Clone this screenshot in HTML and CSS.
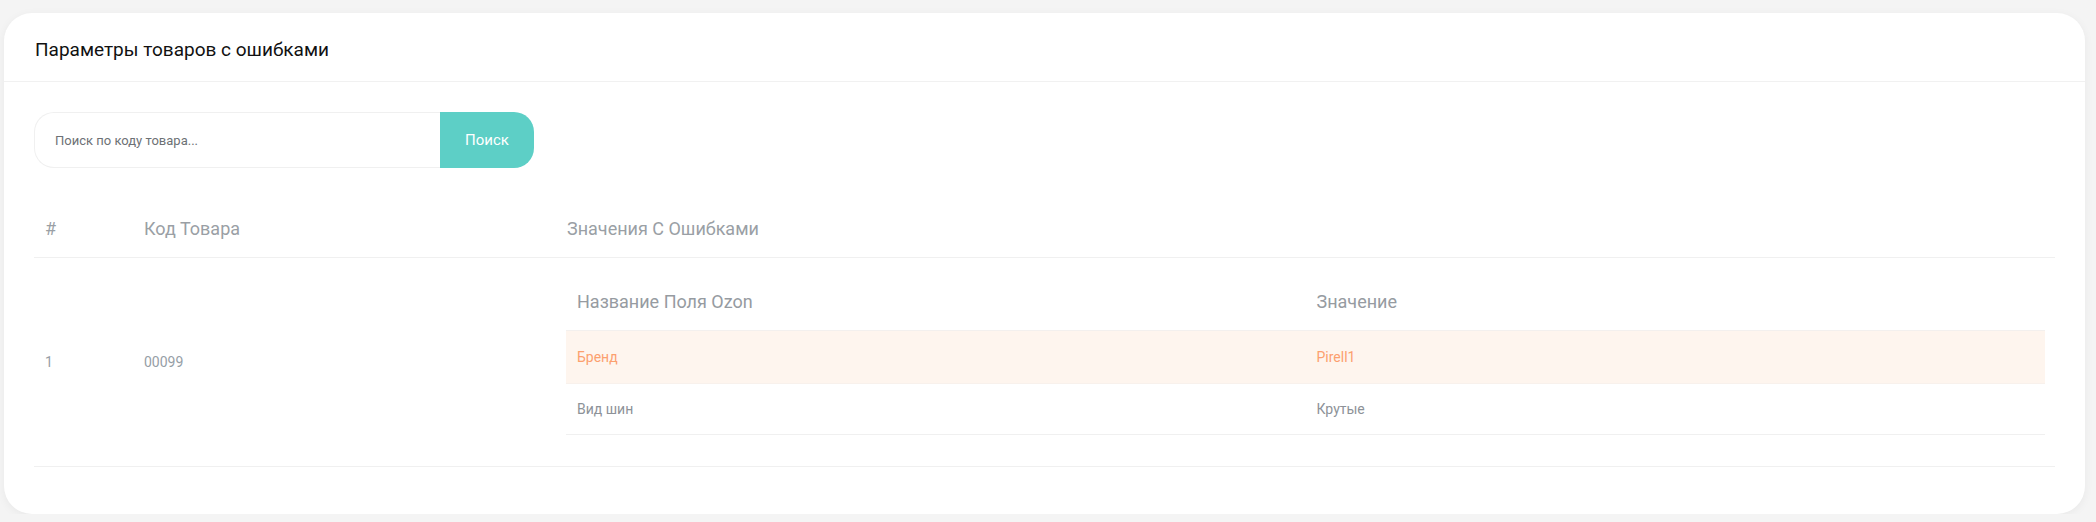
FILE: index.html
```html
<!DOCTYPE html>
<html lang="ru">
<head>
  <meta charset="UTF-8">
  <title>Параметры товаров с ошибками</title>
  <link rel="stylesheet" href="styles.css">
</head>
<body>

  <div class="card">
    <div class="card-header">
      <h4 class="card-title">Параметры товаров с ошибками</h4>
    </div>

    <div class="card-body">
      <form class="search" id="searchForm">
        <input type="text" class="search-input" placeholder="Поиск по коду товара...">
        <button type="submit" class="search-btn">Поиск</button>
      </form>

      <table class="errors">
        <colgroup>
          <col class="col-num">
          <col class="col-code">
          <col>
        </colgroup>
        <thead>
          <tr>
            <th>#</th>
            <th>Код Товара</th>
            <th>Значения С Ошибками</th>
          </tr>
        </thead>
        <tbody>
          <tr>
            <td>1</td>
            <td>00099</td>
            <td class="nested-cell">
              <table class="fields">
                <thead>
                  <tr>
                    <th>Название Поля Ozon</th>
                    <th>Значение</th>
                  </tr>
                </thead>
                <tbody>
                  <tr class="warn">
                    <td>Бренд</td>
                    <td>Pirell1</td>
                  </tr>
                  <tr>
                    <td>Вид шин</td>
                    <td>Крутые</td>
                  </tr>
                </tbody>
              </table>
            </td>
          </tr>
        </tbody>
      </table>
    </div>
  </div>

  <script>
    document.getElementById("searchForm").addEventListener("submit", function (e) {
      e.preventDefault();
    });
  </script>

</body>
</html>
```

FILE: styles.css
```css
body {
  margin: 0;
  font-family: Roboto, "Liberation Sans", sans-serif;
  background-color: #f4f4f4;
}
.card {
  background-color: #fff;
  margin: 13px 11px 0 4px;
  border-radius: 28px;
  box-shadow: 0 2px 10px rgba(0,0,0,0.05);
}
.card-header {
  padding: 23px 31px 17px;
  border-bottom: 1px solid #f1f1f1;
}
.card-title {
  margin: 0;
  font-size: 19px;
  line-height: 28px;
  font-weight: 400;
  color: #111;
}
.card-body {
  padding: 30px 30px 47px;
}
.search {
  display: flex;
  width: 500px;
  height: 56px;
}
.search-input {
  width: 406px;
  box-sizing: border-box;
  padding: 0 20px;
  border: 1px solid #f0f0f0;
  border-right: none;
  border-radius: 20px 0 0 20px;
  font-family: inherit;
  font-size: 13px;
  color: #555;
  outline: none;
}
.search-input::placeholder {
  color: #6d7175;
}
.search-btn {
  width: 94px;
  border: none;
  border-radius: 0 20px 20px 0;
  background-color: #5dcfc6;
  color: #fff;
  font-family: inherit;
  font-size: 15px;
}
.errors {
  width: 100%;
  margin-top: 33px;
  border-collapse: collapse;
  table-layout: fixed;
}
.col-num {
  width: 99px;
}
.col-code {
  width: 423px;
}
.errors > thead th {
  padding: 16px 11px;
  text-align: left;
  font-size: 18px;
  line-height: 24px;
  font-weight: 400;
  color: #9a9fa5;
  border-bottom: 1px solid #f0f0f0;
}
.errors > tbody > tr > td {
  padding: 0 11px;
  font-size: 14px;
  color: #969ea6;
  vertical-align: middle;
  border-bottom: 1px solid #f0f0f0;
}
.errors > tbody > tr > td.nested-cell {
  padding: 16px 10px 31px;
}
.fields {
  width: 100%;
  border-collapse: collapse;
  table-layout: fixed;
}
.fields th {
  padding: 16px 11px;
  text-align: left;
  font-size: 18px;
  line-height: 24px;
  font-weight: 400;
  color: #969ba1;
  border-bottom: 1px solid #f3f0ee;
}
.fields td {
  padding: 16px 11px;
  font-size: 14px;
  line-height: 20px;
  color: #8d9298;
  border-bottom: 1px solid #f0f0f0;
}
.fields tr.warn td {
  background-color: #fef5ee;
  color: #fca06e;
  border-bottom-color: #f8f1ec;
}
.fields tbody tr:last-child td {
  padding: 15px 11px;
}
```
